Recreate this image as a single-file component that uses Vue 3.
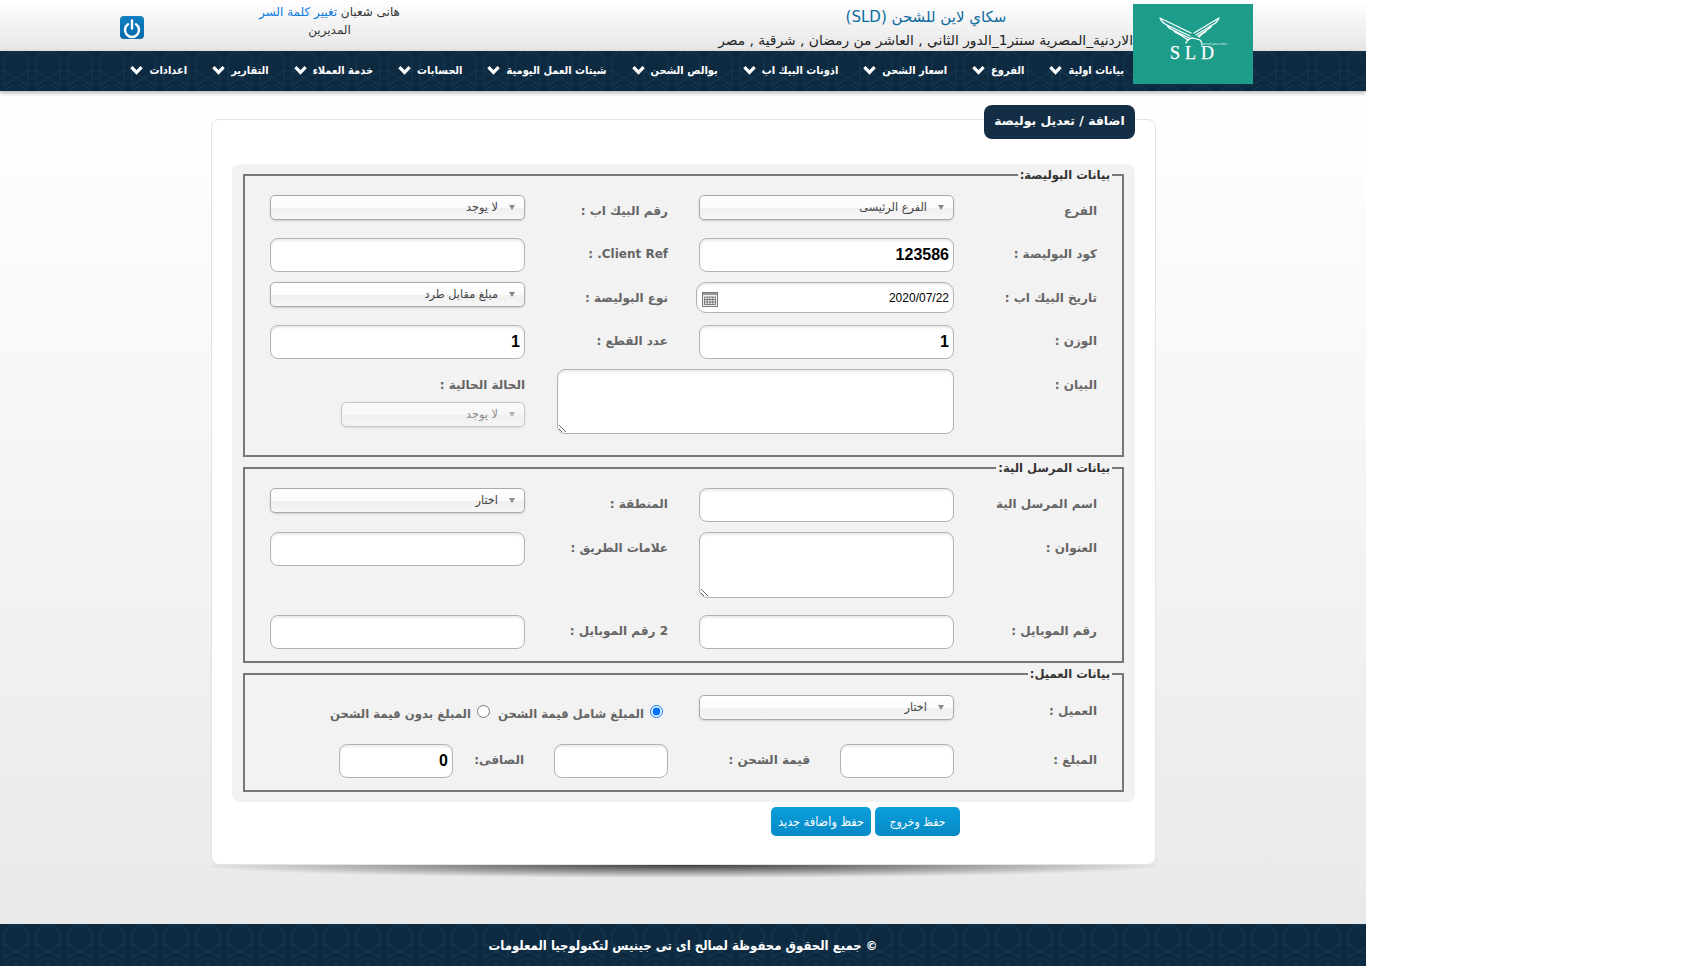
<script setup>
// شاشة اضافة / تعديل بوليصة
const menu = [
  'بيانات اولية',
  'الفروع',
  'اسعار الشحن',
  'اذونات البيك اب',
  'بوالص الشحن',
  'شيتات العمل اليومية',
  'الحسابات',
  'خدمة العملاء',
  'التقارير',
  'اعدادات',
]
</script>

<template>
  <div class="page" dir="rtl">
    <header class="topbar">
      <div class="site">
        <div class="site-name">سكاي لاين للشحن (SLD)</div>
        <div class="site-addr">الاردنية_المصرية سنتر1_الدور الثاني , العاشر من رمضان , شرقية , مصر</div>
      </div>
      <div class="user">
        <div>هانى شعبان <a class="link">تغيير كلمة السر</a></div>
        <div class="user-role">المديرين</div>
      </div>
      <a class="power">
        <svg viewBox="0 0 24 24" width="24" height="24" fill="none" stroke="#fff" stroke-width="2.4" stroke-linecap="round">
          <path d="M12 4.5v8" />
          <path d="M8 8.2a7 7 0 1 0 8 0" />
        </svg>
      </a>
    </header>

    <!-- اللوجو فوق الهيدر والقائمة -->
    <div class="logo" dir="ltr">
      <svg viewBox="0 0 120 80" width="120" height="80">
        <g fill="none" stroke="#fff" stroke-width="1.3" stroke-linejoin="round" stroke-linecap="round">
          <path d="M27 14 L58 29 M27 14 Q29 19 34 21 L57 32 M34 21 Q35 24 40 26 L56 34 M40 26 Q42 29 46 30 L55 36" />
          <path d="M86 14 L61 29 M86 14 Q84 19 79 21 L63 31 M79 21 Q78 24 74 26 L65 32 M74 26 Q72 29 69 30 L66 33" />
          <path d="M53 39 Q55 34 60 34 L67 36 Q69 38 69 41" />
        </g>
        <text x="37" y="55" class="logo-mark">SLD</text>
        <text x="69" y="41" class="logo-tag">send you ems</text>
      </svg>
    </div>

    <nav class="menu">
      <a v-for="item in menu" :key="item" class="menu-item">
        <span>{{ item }}</span>
        <svg viewBox="0 0 13 10" width="13" height="10" fill="none" stroke="#fff" stroke-width="3.2">
          <path d="M1.4 2.2 L6.5 7.4 L11.6 2.2" />
        </svg>
      </a>
    </nav>

    <main class="content">
      <section class="card">
        <h1 class="card-title">اضافة / تعديل بوليصة</h1>

        <div class="panel">
          <fieldset class="group">
            <legend>بيانات البوليصة:</legend>
            <div class="rows rows-first">
              <div class="row row-sel">
                <div class="cell">
                  <label>الفرع</label>
                  <div class="chosen"><i></i><span>الفرع الرئيسى</span></div>
                </div>
                <div class="cell">
                  <label>رقم البيك اب :</label>
                  <div class="chosen"><i></i><span>لا يوجد</span></div>
                </div>
              </div>
              <div class="row">
                <div class="cell">
                  <label>كود البوليصة :</label>
                  <input class="field" dir="rtl" value="123586" />
                </div>
                <div class="cell">
                  <label dir="rtl">Client Ref. :</label>
                  <input class="field" />
                </div>
              </div>
              <div class="row row-sel">
                <div class="cell">
                  <label>تاريخ البيك اب :</label>
                  <div class="date">
                    <input class="field date-input" value="2020/07/22" />
                    <svg class="cal" viewBox="0 0 16 15" width="16" height="15">
                      <rect x="0.5" y="0.5" width="15" height="14" fill="#eee" stroke="#777" />
                      <rect x="1" y="1" width="14" height="2" fill="#999" />
                      <path d="M2.5 5h11M2.5 7.5h11M2.5 10h11M2.5 12.5h11M2.5 5v7.5M5.2 5v7.5M8 5v7.5M10.8 5v7.5M13.5 5v7.5" fill="none" stroke="#666" stroke-width="0.8" />
                    </svg>
                  </div>
                </div>
                <div class="cell">
                  <label>نوع البوليصة :</label>
                  <div class="chosen"><i></i><span>مبلغ مقابل طرد</span></div>
                </div>
              </div>
              <div class="row">
                <div class="cell">
                  <label>الوزن :</label>
                  <input class="field" value="1" />
                </div>
                <div class="cell">
                  <label>عدد القطع :</label>
                  <input class="field" value="1" />
                </div>
              </div>
              <div class="row row-notes">
                <div class="cell">
                  <label>البيان :</label>
                  <textarea class="field area area-wide"></textarea>
                </div>
                <div class="stack">
                  <label>الحالة الحالية :</label>
                  <div class="chosen chosen-off"><i></i><span>لا يوجد</span></div>
                </div>
              </div>
            </div>
          </fieldset>

          <fieldset class="group">
            <legend>بيانات المرسل الية:</legend>
            <div class="rows rows-second">
              <div class="row">
                <div class="cell">
                  <label>اسم المرسل الية</label>
                  <input class="field" />
                </div>
                <div class="cell">
                  <label>المنطقة :</label>
                  <div class="chosen"><i></i><span>اختار</span></div>
                </div>
              </div>
              <div class="row row-addr">
                <div class="cell">
                  <label>العنوان :</label>
                  <textarea class="field area"></textarea>
                </div>
                <div class="cell">
                  <label>علامات الطريق :</label>
                  <input class="field" />
                </div>
              </div>
              <div class="row">
                <div class="cell">
                  <label>رقم الموبايل :</label>
                  <input class="field" />
                </div>
                <div class="cell">
                  <label>2 رقم الموبايل :</label>
                  <input class="field" />
                </div>
              </div>
            </div>
          </fieldset>

          <fieldset class="group group-last">
            <legend>بيانات العميل:</legend>
            <div class="rows rows-third">
              <div class="row row-client">
                <div class="cell">
                  <label>العميل :</label>
                  <div class="chosen"><i></i><span>اختار</span></div>
                </div>
                <div class="radios">
                  <label class="radio"><input type="radio" name="calc" checked />المبلغ شامل قيمة الشحن</label>
                  <label class="radio"><input type="radio" name="calc" />المبلغ بدون قيمة الشحن</label>
                </div>
              </div>
              <div class="row row-money">
                <div class="cell">
                  <label>المبلغ :</label>
                  <input class="field money-a" />
                </div>
                <div class="cell">
                  <label class="lbl-ship">قيمة الشحن :</label>
                  <input class="field money-b" />
                </div>
                <div class="cell">
                  <label class="lbl-net">الصافى:</label>
                  <input class="field money-b" value="0" />
                </div>
              </div>
            </div>
          </fieldset>
        </div>

        <div class="actions">
          <button class="btn btn-exit" type="button">حفظ وخروج</button>
          <button class="btn btn-new" type="button">حفظ واضافة جديد</button>
        </div>

        <div class="card-shadow"></div>
      </section>
    </main>

    <footer class="foot">© جميع الحقوق محفوظة لصالح اى تى جينيس لتكنولوجيا المعلومات</footer>
  </div>
</template>

<style scoped>
.page {
  position: relative;
  width: 1366px;
  height: 966px;
  display: flex;
  flex-direction: column;
  font-family: "DejaVu Sans", sans-serif;
  background: linear-gradient(#fff 90px, #e9e9e9 925px);
  overflow: hidden;
}

/* header */
.topbar {
  height: 51px;
  display: flex;
  padding-right: 233px;
  background: linear-gradient(#fff, #e6e6e6);
  box-sizing: border-box;
}
.site {
  width: 414px;
  text-align: center;
}
.site-name {
  margin-top: 7px;
  font-size: 15px;
  line-height: 20px;
  color: #0b6a9e;
}
.site-addr {
  margin-top: 5px;
  font-size: 13.8px;
  line-height: 16px;
  color: #222;
  white-space: nowrap;
}
.user {
  width: 141px;
  margin-right: 319px;
  padding-top: 3px;
  font-size: 12px;
  line-height: 18px;
  color: #333;
  text-align: center;
  white-space: nowrap;
}
.user .link {
  color: #0d7be0;
}
.power {
  width: 24px;
  height: 23px;
  margin: 16px 115px 0 0;
  border-radius: 4px;
  background: linear-gradient(#0f7fc2, #0a68a8);
  display: flex;
  align-items: center;
  justify-content: center;
}
.logo {
  position: absolute;
  top: 4px;
  left: 1133px;
  width: 120px;
  height: 80px;
  background: #1e9c8a;
  z-index: 2;
}
.logo svg {
  display: block;
}
.logo-mark {
  font-family: "Liberation Serif", serif;
  font-size: 18px;
  letter-spacing: 5px;
  fill: #fff;
  stroke: #fff;
  stroke-width: 0.25px;
}
.logo-tag {
  font-family: "Liberation Sans", sans-serif;
  font-size: 4px;
  fill: #d5efe9;
}

/* القائمة */
.menu,
.foot {
  background-color: #0d2a40;
  background-image: url("data:image/svg+xml,%3Csvg xmlns='http://www.w3.org/2000/svg' width='32' height='34'%3E%3Cg fill='none' stroke='%23153650' stroke-width='1.2'%3E%3Cpath d='M4 34V12a12 12 0 0 1 24 0v22'/%3E%3Cpath d='M4 20l24 14M28 20L4 34M0 20h8M24 20h8M16 0v8'/%3E%3C/g%3E%3C/svg%3E");
}
.menu {
  height: 40px;
  flex: none;
  box-sizing: border-box;
  display: flex;
  align-items: center;
  gap: 25px;
  padding-right: 242px;
  padding-bottom: 2px;
  box-shadow: 0 2px 4px rgba(0, 0, 0, 0.3);
  position: relative;
}
.menu-item {
  display: flex;
  align-items: center;
  gap: 6px;
  color: #fff;
  font-family: "DejaVu Sans Condensed", "DejaVu Sans", sans-serif;
  font-stretch: condensed;
  font-size: 11px;
  font-weight: bold;
  white-space: nowrap;
}

/* البطاقة */
.content {
  flex: 1;
  padding: 28px 210px 0 211px;
}
.card {
  position: relative;
  width: 945px;
  height: 746px;
  box-sizing: border-box;
  background: #fff;
  border: 1px solid #e3e3e3;
  border-radius: 8px;
}
.card-title {
  position: absolute;
  top: -15px;
  right: 20px;
  width: 151px;
  height: 34px;
  margin: 0;
  box-sizing: border-box;
  border-radius: 8px;
  background: #142f45;
  color: #fff;
  font-size: 12.4px;
  font-weight: bold;
  line-height: 32px;
  text-align: center;
}
.card-shadow {
  position: absolute;
  top: 745px;
  left: -1px;
  width: 945px;
  height: 13px;
  background: radial-gradient(ellipse 52% 100% at 50% 0, rgba(30, 30, 30, 0.85), rgba(60, 60, 60, 0.3) 70%, transparent);
}
.panel {
  margin: 44px 20px 0;
  padding: 3px 11px 10px;
  background: #f2f2f2;
  border-radius: 8px;
}
.group {
  margin: 0 0 3px;
  padding: 0;
  min-width: 0;
  border: 2px solid #777;
}
.group-last {
  margin-bottom: 0;
}
.group legend {
  margin-right: 10px;
  padding: 0 2px;
  font-size: 11.6px;
  font-weight: bold;
  line-height: 16px;
  color: #333;
}
.rows {
  padding-right: 24px;
}
.rows-first {
  padding-top: 12px;
  padding-bottom: 21px;
}
.rows-second {
  padding-top: 12px;
  padding-bottom: 12px;
}
.rows-third {
  padding-top: 13px;
  padding-bottom: 12px;
}
.row {
  display: flex;
  gap: 30px;
  height: 44px;
}
.row-sel {
  height: 43px;
}
.row-notes {
  height: 65px;
  gap: 32px;
}
.row-addr {
  height: 83px;
}
.row-client {
  height: 49px;
}
.row-money {
  height: 34px;
  gap: 29px;
}
.rows-second .row:last-child {
  height: 34px;
}
.cell {
  display: flex;
}
.cell > label,
.stack > label {
  width: 144px;
  flex: none;
  box-sizing: border-box;
  padding-top: 8px;
  padding-right: 1px;
  font-size: 12px;
  font-weight: bold;
  line-height: 16px;
  color: #666;
  white-space: nowrap;
}
.cell > .lbl-ship {
  width: 143px;
}
.cell > .lbl-net {
  width: 72px;
}
.stack {
  width: 184px;
  display: flex;
  flex-direction: column;
}
.stack > label {
  width: auto;
  height: 33px;
  padding-right: 0;
}

/* الحقول */
.field {
  display: block;
  width: 255px;
  height: 34px;
  box-sizing: border-box;
  padding: 0 4px;
  border: 1px solid #b2b2ba;
  border-radius: 8px;
  background: #fff;
  box-shadow: inset 0 2px 2px rgba(0, 0, 0, 0.08);
  font-family: "Liberation Sans", sans-serif;
  font-size: 16px;
  font-weight: bold;
  color: #000;
  text-align: right;
  outline: none;
}
.area {
  height: 66px;
  padding: 4px 6px;
  direction: rtl;
}
.area-wide {
  width: 397px;
  height: 65px;
}
.money-a {
  width: 114px;
}
.money-b {
  width: 114px;
}
.date {
  position: relative;
  width: 255px;
  height: 31px;
}
.date-input {
  width: 258px;
  height: 31px;
  font-size: 12px;
  font-weight: normal;
  border-radius: 10px;
}
.cal {
  position: absolute;
  top: 10px;
  left: 3px;
}
.chosen {
  position: relative;
  width: 255px;
  height: 25px;
  box-sizing: border-box;
  border: 1px solid #aaa;
  border-radius: 5px;
  background: linear-gradient(#fff 0, #fbfbfb 50%, #efefef 52%, #f6f6f6 100%);
  box-shadow: 0 1px 2px rgba(0, 0, 0, 0.15);
  font-size: 11.3px;
  line-height: 24px;
  color: #444;
  padding-right: 26px;
  white-space: nowrap;
}
.chosen i {
  position: absolute;
  top: 9px;
  right: 9px;
  width: 0;
  height: 0;
  border-style: solid;
  border-width: 5px 3.5px 0;
  border-color: #888 transparent transparent;
}
.chosen-off {
  width: 184px;
  opacity: 0.6;
}
.radios {
  display: flex;
  gap: 8px;
  padding-top: 9px;
  margin-right: 6px;
  height: 20px;
}
.radio {
  display: flex;
  align-items: center;
  font-size: 11.7px;
  font-weight: bold;
  color: #666;
  white-space: nowrap;
}
.radio input {
  width: 13px;
  height: 13px;
  margin: 0 0 0 6px;
  position: relative;
  top: -3px;
}

/* الازرار */
.actions {
  display: flex;
  gap: 4px;
  margin: 5px 195px 0 0;
}
.btn {
  height: 29px;
  padding: 0;
  border: 0;
  border-radius: 5px;
  background: linear-gradient(#0a9fdb, #0789c6);
  color: #fff;
  font-family: "DejaVu Sans Condensed", "DejaVu Sans", sans-serif;
  font-stretch: condensed;
  font-size: 12px;
}
.btn-exit {
  width: 85px;
}
.btn-new {
  width: 100px;
  font-size: 12.6px;
}

.foot {
  height: 42px;
  flex: none;
  color: #fff;
  font-family: "DejaVu Sans Condensed", "DejaVu Sans", sans-serif;
  font-stretch: condensed;
  font-size: 13px;
  font-weight: bold;
  line-height: 44px;
  text-align: center;
}
</style>

<style>
html,
body {
  background: #fff;
}
</style>
